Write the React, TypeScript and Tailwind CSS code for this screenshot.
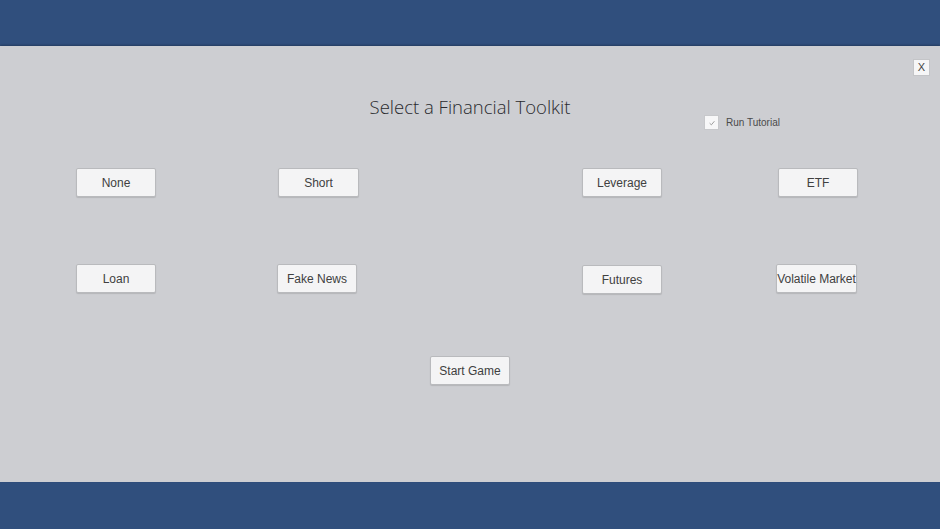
import React from 'react';

function ToolButton({ label, className = '' }: { label: string; className?: string }) {
  return (
    <button
      className={`flex h-[29px] w-[80px] items-center justify-center whitespace-nowrap rounded-[2px] border border-[#b9babd] bg-[#f4f4f5] text-[12px] text-[#404040] shadow-[0_1px_1px_rgba(0,0,0,0.12)] ${className}`}
      style={{ fontFamily: '"Liberation Sans", Arial, sans-serif' }}
    >
      {label}
    </button>
  );
}

export default function App() {
  return (
    <div className="flex h-[529px] w-[940px] flex-col bg-[#304f7d]">
      <div className="h-[46px] shrink-0" />

      {/* Toolkit panel */}
      <div className="relative h-[436px] shrink-0 bg-[#cdced2] shadow-[0_-1px_2px_rgba(0,0,0,0.25)]">
        <button
          className="absolute right-[10px] top-[13px] flex h-[17px] w-[17px] items-center justify-center border border-[#c4c5c8] bg-[#f6f6f7] text-[11px] text-[#444]"
          style={{ fontFamily: '"Liberation Sans", Arial, sans-serif' }}
        >
          X
        </button>

        <label
          className="absolute left-[704px] top-[69px] flex items-center gap-[7px] text-[10px] text-[#4a4a4a]"
          style={{ fontFamily: '"Liberation Sans", Arial, sans-serif' }}
        >
          <span className="flex h-[15px] w-[15px] items-center justify-center border border-[#c7c8cb] bg-[#f7f7f8]">
            <svg viewBox="0 0 10 10" className="h-[8px] w-[8px]" fill="none" stroke="#9a9a9a" strokeWidth="1.2">
              <path d="M2 5.2 L4.2 7.3 L8 2.8" />
            </svg>
          </span>
          Run Tutorial
        </label>

        <div className="flex flex-col pt-[48px]">
          <h1
            className="text-center text-[18.5px] leading-[26px] text-[#2a2a2e]"
            style={{ fontFamily: '"Open Sans", "Noto Sans", sans-serif', fontWeight: 300 }}
          >
            Select a Financial Toolkit
          </h1>

          <div className="mt-[48px] flex pl-[76px]">
            <ToolButton label="None" />
            <ToolButton label="Short" className="ml-[122px] w-[81px]" />
            <ToolButton label="Leverage" className="ml-[223px]" />
            <ToolButton label="ETF" className="ml-[116px]" />
          </div>

          <div className="mt-[67px] flex items-start pl-[76px]">
            <ToolButton label="Loan" />
            <ToolButton label="Fake News" className="ml-[121px]" />
            <ToolButton label="Futures" className="ml-[225px] mt-[1px]" />
            <ToolButton label="Volatile Market" className="ml-[114px] w-[81px]" />
          </div>

          <div className="mt-[62px] flex justify-center">
            <ToolButton label="Start Game" />
          </div>
        </div>
      </div>

      <div className="flex-1" />
    </div>
  );
}
